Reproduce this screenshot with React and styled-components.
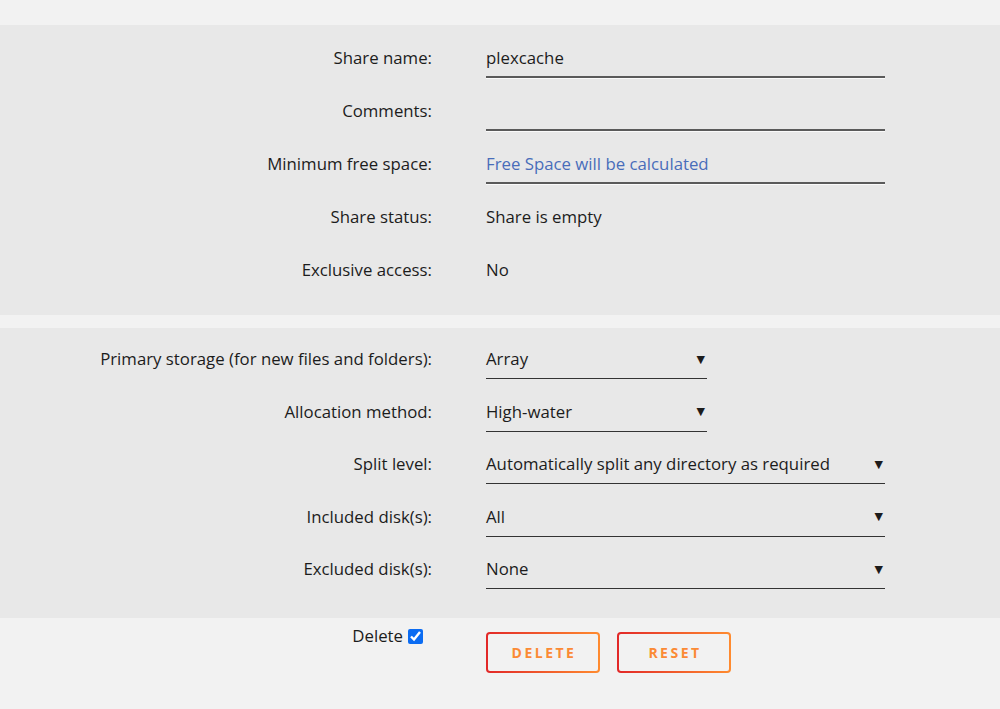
import React from "react";
import styled, { createGlobalStyle } from "styled-components";

const Global = createGlobalStyle`
  html, body { margin: 0; padding: 0; background: #f2f2f2; }
  body { font-family: "Open Sans", "DejaVu Sans", sans-serif; font-size: 16.8px; color: #1c1c1c; }
`;

const Page = styled.div`
  padding-top: 25px;
  width: 1000px;
  height: 709px;
  box-sizing: border-box;
  display: flex;
  flex-direction: column;
  gap: 13px;
`;

const Panel = styled.section`
  --row-h: ${(p) => p.$rowH}px;
  background: #e8e8e8;
  padding: ${(p) => p.$top}px 0 0;
  height: 290px;
  box-sizing: border-box;
  display: flex;
  flex-direction: column;
`;

const Row = styled.div`
  display: grid;
  grid-template-columns: 432px 1fr;
  column-gap: 54px;
  height: var(--row-h);
  flex: none;
  align-items: center;
`;

const Label = styled.label`
  text-align: right;
  line-height: 20px;
`;

const TextInput = styled.div`
  width: 399px;
  height: 40px;
  box-sizing: border-box;
  display: flex;
  align-items: center;
  border-bottom: 2px solid #5a5a5a;
  box-shadow: 0 1px 0 #fafafa;
  color: ${(p) => (p.$info ? "#486dba" : "#1c1c1c")};
  padding-top: 2px;
`;

const Value = styled.div`
  line-height: 20px;
`;

const Select = styled.div`
  width: ${(p) => (p.$wide ? "399px" : "221px")};
  height: 40px;
  box-sizing: border-box;
  display: flex;
  align-items: center;
  justify-content: space-between;
  border-bottom: 1px solid #333;
  padding-top: 1px;
`;

const Arrow = styled.span`
  font-size: 11px;
  color: #1c1c1c;
  margin-right: 2px;
  font-family: "DejaVu Sans", sans-serif;
`;

const Footer = styled.div`
  display: grid;
  grid-template-columns: 432px 1fr;
  column-gap: 54px;
  margin-top: -13px;
  padding-top: 8px;
`;

const CheckLabel = styled.label`
  display: flex;
  justify-content: flex-end;
  align-items: center;
  gap: 5px;
  line-height: 20px;
  padding-right: 9px;
  height: 20px;
`;

const Check = styled.input`
  width: 15px;
  height: 15px;
  margin: 0;
  accent-color: #0b6cf2;
`;

const Buttons = styled.div`
  display: flex;
  gap: 17px;
  padding-top: 6px;
`;

const Button = styled.button`
  width: 114px;
  height: 41px;
  border: 2px solid transparent;
  border-radius: 4px;
  background: linear-gradient(#f2f2f2, #f2f2f2) padding-box,
    linear-gradient(90deg, #e22828, #ff8b2f) border-box;
  font-family: "Open Sans", sans-serif;
  font-weight: 700;
  font-size: 14px;
  letter-spacing: 2.5px;
  color: #fb8a35;
  cursor: pointer;
  padding: 0 0 0 2px;
`;

export default function App() {
  return (
    <>
      <Global />
      <Page>
        <Panel $rowH={53} $top={6}>
          <Row>
            <Label>Share name:</Label>
            <TextInput><Value>plexcache</Value></TextInput>
          </Row>
          <Row>
            <Label>Comments:</Label>
            <TextInput />
          </Row>
          <Row>
            <Label>Minimum free space:</Label>
            <TextInput $info><Value>Free Space will be calculated</Value></TextInput>
          </Row>
          <Row>
            <Label>Share status:</Label>
            <Value>Share is empty</Value>
          </Row>
          <Row>
            <Label>Exclusive access:</Label>
            <Value>No</Value>
          </Row>
        </Panel>
        <Panel $rowH={52.5} $top={5}>
          <Row>
            <Label>Primary storage (for new files and folders):</Label>
            <Select><Value>Array</Value><Arrow>▼</Arrow></Select>
          </Row>
          <Row>
            <Label>Allocation method:</Label>
            <Select><Value>High-water</Value><Arrow>▼</Arrow></Select>
          </Row>
          <Row>
            <Label>Split level:</Label>
            <Select $wide><Value>Automatically split any directory as required</Value><Arrow>▼</Arrow></Select>
          </Row>
          <Row>
            <Label>Included disk(s):</Label>
            <Select $wide><Value>All</Value><Arrow>▼</Arrow></Select>
          </Row>
          <Row>
            <Label>Excluded disk(s):</Label>
            <Select $wide><Value>None</Value><Arrow>▼</Arrow></Select>
          </Row>
        </Panel>
        <Footer>
          <CheckLabel>Delete <Check type="checkbox" defaultChecked /></CheckLabel>
          <Buttons>
            <Button>DELETE</Button>
            <Button>RESET</Button>
          </Buttons>
        </Footer>
      </Page>
    </>
  );
}
